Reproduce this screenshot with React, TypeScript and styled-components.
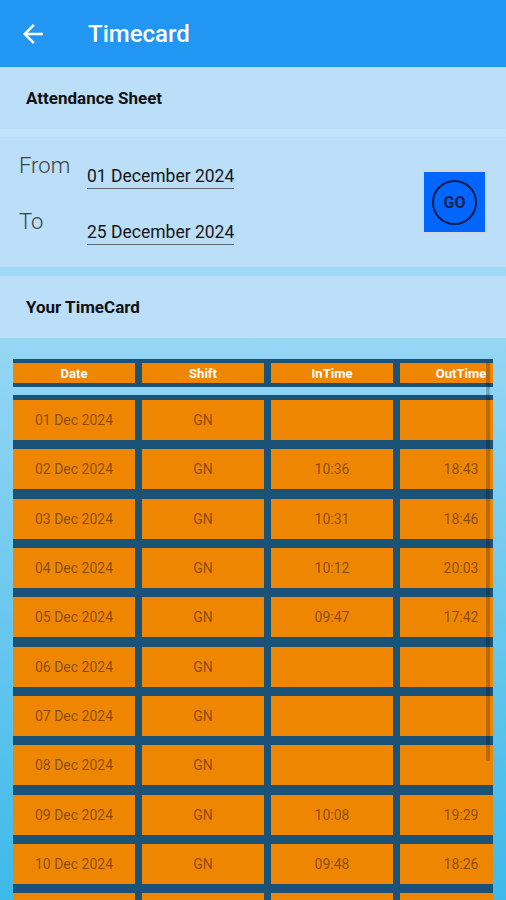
import styled, { createGlobalStyle } from "styled-components";

const GlobalStyle = createGlobalStyle`
	body {
		margin: 0;
		font-family: Roboto, "Noto Sans", sans-serif;
	}
`;

type Entry = { date: string; shift: string; inTime: string; outTime: string };

const entries: Entry[] = [
	{ date: "01 Dec 2024", shift: "GN", inTime: "", outTime: "" },
	{ date: "02 Dec 2024", shift: "GN", inTime: "10:36", outTime: "18:43" },
	{ date: "03 Dec 2024", shift: "GN", inTime: "10:31", outTime: "18:46" },
	{ date: "04 Dec 2024", shift: "GN", inTime: "10:12", outTime: "20:03" },
	{ date: "05 Dec 2024", shift: "GN", inTime: "09:47", outTime: "17:42" },
	{ date: "06 Dec 2024", shift: "GN", inTime: "", outTime: "" },
	{ date: "07 Dec 2024", shift: "GN", inTime: "", outTime: "" },
	{ date: "08 Dec 2024", shift: "GN", inTime: "", outTime: "" },
	{ date: "09 Dec 2024", shift: "GN", inTime: "10:08", outTime: "19:29" },
	{ date: "10 Dec 2024", shift: "GN", inTime: "09:48", outTime: "18:26" },
];

const Screen = styled.div`
	height: 900px;
	overflow: hidden;
	background: linear-gradient(
		180deg,
		#c4e8fc 0%,
		#c0e5fb 14.4%,
		#9fdaf5 30%,
		#95d6f4 37.8%,
		#3eb9e9 100%
	);
`;

const AppBar = styled.header`
	height: 67px;
	display: flex;
	align-items: center;
	background: #2196f3;
	padding-left: 18px;
	box-sizing: border-box;
`;

const BackButton = styled.button`
	display: flex;
	border: none;
	background: none;
	padding: 0;
	width: 30px;
	height: 30px;
	margin-right: 40px;
	margin-top: 1px;
`;

const Title = styled.h1`
	margin: 0;
	font-size: 24px;
	font-weight: 500;
	color: #fff;
`;

const Card = styled.section<{ $height: number; $gap?: number }>`
	height: ${(p) => p.$height}px;
	margin-top: ${(p) => p.$gap ?? 0}px;
	background: #bbdef9;
	box-sizing: border-box;
`;

const CardTitle = styled.div`
	height: 100%;
	display: flex;
	align-items: center;
	padding-left: 26px;
	font-size: 17px;
	font-weight: 700;
	color: #111;
`;

const RangeCard = styled.div`
	height: 100%;
	display: flex;
	align-items: flex-start;
	justify-content: space-between;
	padding: 15px 20px 0 19px;
	box-sizing: border-box;
`;

const RangeFields = styled.div`
	display: grid;
	grid-template-columns: 68px auto;
	grid-template-rows: 56px 56px;
	align-items: start;
`;

const RangeLabel = styled.span`
	font-size: 22px;
	font-weight: 300;
	color: #404040;
	line-height: 28px;
`;

const DateField = styled.span`
	justify-self: start;
	margin-top: 8px;
	font-size: 17.5px;
	color: #161616;
	line-height: 24px;
	padding-top: 4px;
	border-bottom: 1.5px solid #5d6874;
`;

const GoButton = styled.button`
	align-self: center;
	width: 63px;
	height: 64px;
	margin-top: -15px;
	display: flex;
	align-items: center;
	justify-content: center;
	background: #0066ff;
	border: 1px solid #d4d4d4;
	border-width: 2px 1px;
	padding: 0;
	box-sizing: border-box;
`;

const GoRing = styled.span`
	width: 41px;
	height: 41px;
	border: 2px solid #0e1c4a;
	border-radius: 50%;
	display: flex;
	align-items: center;
	justify-content: center;
	font-family: Roboto, sans-serif;
	font-weight: 700;
	font-size: 16px;
	color: #102050;
`;

const TableViewport = styled.div`
	position: relative;
	width: 480px;
	margin: 21px 0 0 13px;
	overflow: hidden;
`;

const Row = styled.div<{ $head?: boolean }>`
	display: flex;
	gap: 7px;
	width: max-content;
	background: #1b5277;
	padding: ${(p) => (p.$head ? "4px 0" : "5px 0 4.33px")};
	margin-bottom: ${(p) => (p.$head ? 8 : 0)}px;
`;

const Cell = styled.div<{ $head?: boolean }>`
	width: 122px;
	height: ${(p) => (p.$head ? 20 : 40)}px;
	display: flex;
	align-items: center;
	justify-content: center;
	background: #ef8602;
	font-size: ${(p) => (p.$head ? 13 : 14)}px;
	font-weight: ${(p) => (p.$head ? 700 : 400)};
	color: ${(p) => (p.$head ? "#fff" : "rgba(0, 0, 0, 0.45)")};
`;

const ScrollThumb = styled.div`
	position: absolute;
	top: 3px;
	right: 3px;
	width: 4px;
	height: 399px;
	background: rgba(0, 0, 0, 0.22);
	border-radius: 2px;
`;

function BackArrow() {
	return (
		<svg width="30" height="30" viewBox="0 0 24 24" fill="#fff">
			<path d="M20 11H7.83l5.59-5.59L12 4l-8 8 8 8 1.41-1.41L7.83 13H20v-2z" />
		</svg>
	);
}

export default function App() {
	return (
		<Screen>
			<GlobalStyle />
			<AppBar>
				<BackButton aria-label="Back">
					<BackArrow />
				</BackButton>
				<Title>Timecard</Title>
			</AppBar>

			<Card $height={62}>
				<CardTitle>Attendance Sheet</CardTitle>
			</Card>

			<Card $height={130} $gap={8}>
				<RangeCard>
					<RangeFields>
						<RangeLabel>From</RangeLabel>
						<DateField>01 December 2024</DateField>
						<RangeLabel>To</RangeLabel>
						<DateField>25 December 2024</DateField>
					</RangeFields>
					<GoButton>
						<GoRing>GO</GoRing>
					</GoButton>
				</RangeCard>
			</Card>

			<Card $height={62} $gap={9}>
				<CardTitle>Your TimeCard</CardTitle>
			</Card>

			<TableViewport>
				<Row $head>
					{["Date", "Shift", "InTime", "OutTime"].map((h) => (
						<Cell $head key={h}>
							{h}
						</Cell>
					))}
				</Row>
				{entries.map((e) => (
					<Row key={e.date}>
						<Cell>{e.date}</Cell>
						<Cell>{e.shift}</Cell>
						<Cell>{e.inTime}</Cell>
						<Cell>{e.outTime}</Cell>
					</Row>
				))}
				{/* next row, scrolled just below the fold */}
				<Row>
					<Cell />
					<Cell />
					<Cell />
					<Cell />
				</Row>
				<ScrollThumb />
			</TableViewport>
		</Screen>
	);
}
